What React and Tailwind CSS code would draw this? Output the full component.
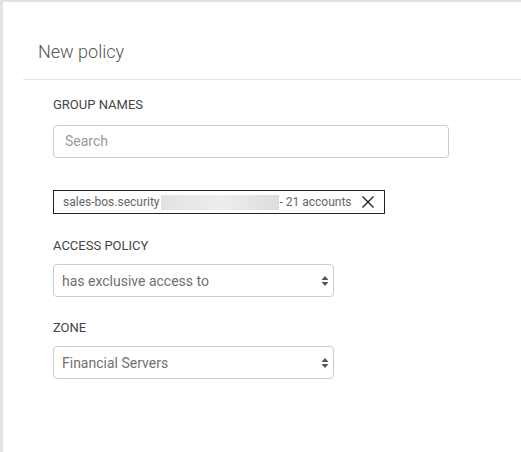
import React from "react";

function Arrows() {
  return (
    <svg width="8" height="12" viewBox="0 0 8 12" className="absolute right-[4px] top-1/2 -translate-y-1/2">
      <path d="M4 1 L7.5 5 L0.5 5 Z" fill="#555" />
      <path d="M4 11 L7.5 7 L0.5 7 Z" fill="#555" />
    </svg>
  );
}

function Select({ value }) {
  return (
    <div className="relative w-[281px] h-[33px] border border-[#cccccc] rounded-[4px] flex items-center pl-[8px] pt-[1px] text-[14px] text-[#707070]">
      {value}
      <Arrows />
    </div>
  );
}

export default function App() {
  return (
    <div className="w-[521px] h-[452px] bg-[#dde3e7] pl-[3px] pt-[2px] font-['Roboto',sans-serif]">
      <div className="w-full h-full bg-white">
        <div className="h-[77px] pl-[35px] flex items-center text-[18px] font-light text-[#555555] pt-[22px]">
          New policy
        </div>
        <div className="ml-[20px] h-px bg-[#e4e4e4]" />
        <div className="pl-[50px] pt-[17px]">
          <div className="text-[13px] text-[#444444] leading-[16px]">GROUP NAMES</div>
          <div className="mt-[12px] w-[396px] h-[33px] border border-[#cccccc] rounded-[4px] flex items-center pl-[11px] text-[14px] text-[#9a9a9a]">
            Search
          </div>
          <div className="mt-[32px] w-[332px] h-[24px] border border-[#222222] flex items-center pl-[9px] text-[12px] text-[#666666]">
            <span>sales-bos.security</span>
            <span className="ml-[1px] w-[118px] h-[15px] bg-gradient-to-r from-[#e2e2e2] via-[#eeeeee] to-[#dddddd]" />
            <span className="ml-[1px]">- 21 accounts</span>
            <svg width="14" height="14" viewBox="0 0 14 14" className="ml-[9px]">
              <path d="M1.5 1.5 L12.5 12.5 M12.5 1.5 L1.5 12.5" stroke="#222" strokeWidth="1.4" fill="none" />
            </svg>
          </div>
          <div className="mt-[24px] text-[13px] text-[#444444] leading-[16px]">ACCESS POLICY</div>
          <div className="mt-[10px]">
            <Select value="has exclusive access to" />
          </div>
          <div className="mt-[23px] text-[13px] text-[#444444] leading-[16px]">ZONE</div>
          <div className="mt-[10px]">
            <Select value="Financial Servers" />
          </div>
        </div>
      </div>
    </div>
  );
}
